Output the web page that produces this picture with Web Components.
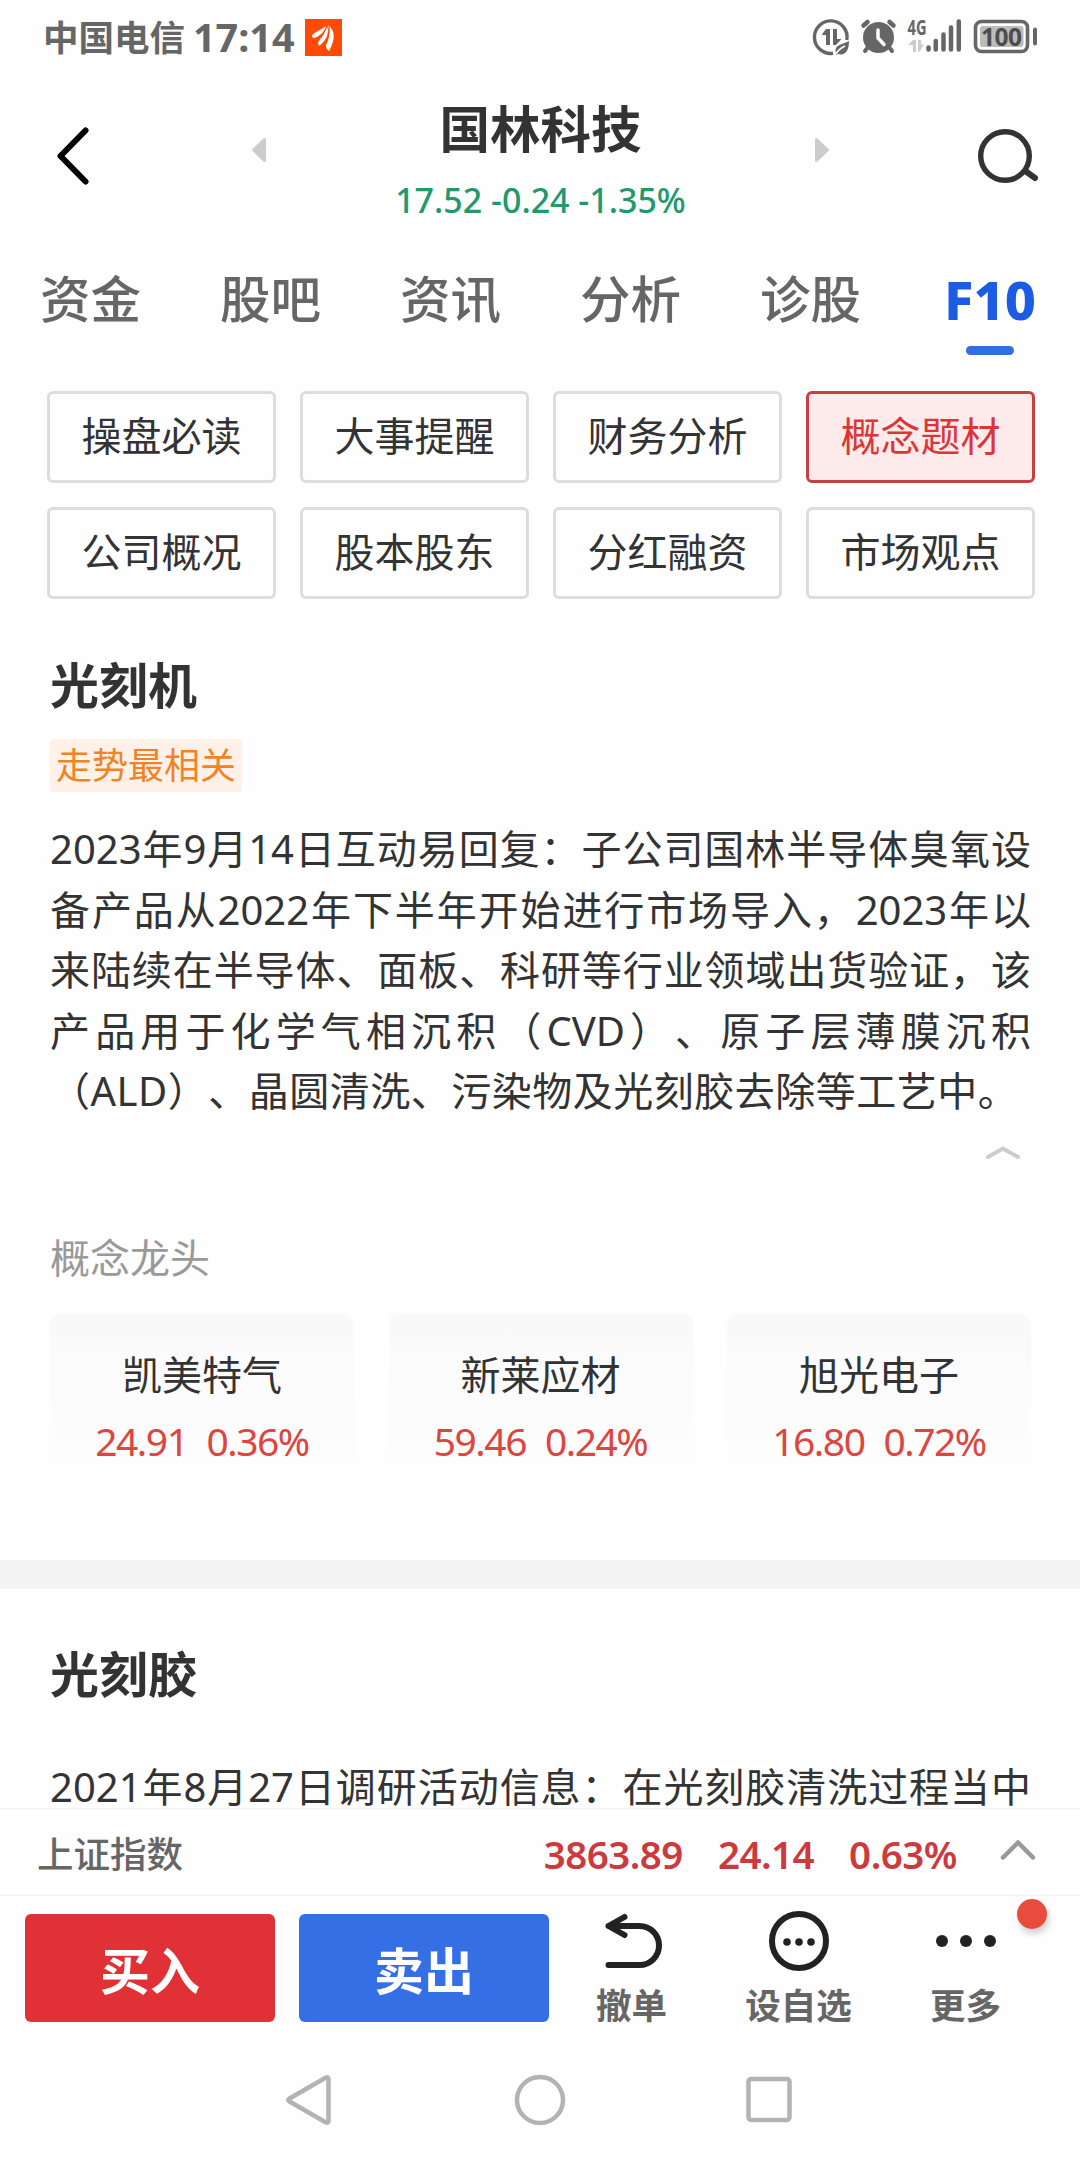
<!DOCTYPE html>
<html lang="zh-CN">
<head>
<meta charset="utf-8">
<title>国林科技 F10</title>
<style>
  body {
    margin: 0;
    background: #fefefe;
    color: #333;
    font-family: "Noto Sans CJK SC", sans-serif;
    --num-font: "Noto Sans", "Noto Sans CJK SC", sans-serif;
  }
</style>
</head>
<body>
<stock-page>
  <status-bar slot="top"></status-bar>
  <stock-header slot="top" name="国林科技" quote="17.52 -0.24 -1.35%"></stock-header>
  <tab-bar slot="top">
    <tab-item>资金</tab-item>
    <tab-item>股吧</tab-item>
    <tab-item>资讯</tab-item>
    <tab-item>分析</tab-item>
    <tab-item>诊股</tab-item>
    <tab-item active>F10</tab-item>
  </tab-bar>

  <menu-grid>
    <menu-button>操盘必读</menu-button>
    <menu-button>大事提醒</menu-button>
    <menu-button>财务分析</menu-button>
    <menu-button active>概念题材</menu-button>
    <menu-button>公司概况</menu-button>
    <menu-button>股本股东</menu-button>
    <menu-button>分红融资</menu-button>
    <menu-button>市场观点</menu-button>
  </menu-grid>
  <concept-section name="光刻机" tag="走势最相关">
    <text-line>2023年9月14日互动易回复：子公司国林半导体臭氧设</text-line>
    <text-line>备产品从2022年下半年开始进行市场导入，2023年以</text-line>
    <text-line>来陆续在半导体、面板、科研等行业领域出货验证，该</text-line>
    <text-line>产品用于化学气相沉积（CVD）、原子层薄膜沉积</text-line>
    <text-line last>（ALD）、晶圆清洗、污染物及光刻胶去除等工艺中。</text-line>
    <leader-list slot="extra">
      <leader-card name="凯美特气" price="24.91" change="0.36%"></leader-card>
      <leader-card name="新莱应材" price="59.46" change="0.24%"></leader-card>
      <leader-card name="旭光电子" price="16.80" change="0.72%"></leader-card>
    </leader-list>
  </concept-section>
  <concept-section name="光刻胶">
    <text-line>2021年8月27日调研活动信息：在光刻胶清洗过程当中</text-line>
  </concept-section>

  <index-bar slot="bottom"></index-bar>
  <trade-bar slot="bottom"></trade-bar>
  <system-nav slot="bottom"></system-nav>
</stock-page>

<script>
  function define(name, render) {
    customElements.define(name, class extends HTMLElement {
      constructor() {
        super();
        this.attachShadow({ mode: 'open' });
      }

      connectedCallback() {
        this.shadowRoot.innerHTML = render(this);
      }
    });
  }

  define('stock-page', () => `
    <style>
      :host { display: flex; flex-direction: column; width: 1080px; height: 2160px; overflow: hidden; }
      main { flex: 1; min-height: 0; overflow: hidden; }
    </style>
    <slot name="top"></slot>
    <main><slot></slot></main>
    <slot name="bottom"></slot>
  `);

  define('status-bar', () => `
    <style>
      :host { display: flex; align-items: center; height: 76px; box-sizing: border-box; padding: 0 42px 2px 43px; color: #666; }
      .carrier { font-size: 35.5px; font-weight: 700; line-height: 40px; margin-top: -3px; }
      .time { font: 700 39.5px/40px var(--num-font); margin-left: 8px; }
      .app { margin-left: 10px; }
      .icons { margin-left: auto; }
      svg { display: block; }
      text { font-family: var(--num-font); }
    </style>
    <span class="carrier">中国电信</span>
    <span class="time">17:14</span>
    <svg class="app" width="37" height="37" viewBox="0 0 37 37">
      <rect width="37" height="37" fill="#ff4a05"/>
      <path fill="#fff" d="M7 17c1-4 8-5 14-10-1 5-6 11-13 12zM13 24c1-4 6-6 9-17 3 8-2 16-8 20zM21 26c3-5 4-11 2-20 7 5 8 14 1 26-2-1-3-3-3-6z"/>
      <path fill="none" stroke="#ff4a05" stroke-width="1" d="M22 7c-2 6-5 9-10 13M24 7c1 8-1 13-4 18"/>
    </svg>
    <svg class="icons" width="226" height="70" viewBox="812 2 226 70" fill="none" stroke="#666">
      <g>
        <path stroke-width="3.400" d="M833 53.300A16.300 16.300 0 1 1 846.800 40"/>
        <path fill="#666" stroke="none" d="M826 29h4v16h-4V35h-4.500zM833 29h4v10h4.500L836 45h-3z"/>
        <path fill="#666" stroke="none" d="M836 53c-2-9 6-8 13-12 0 10-4 15-11 13l-2 1z"/>
        <path stroke="#fefefe" stroke-width="1.600" d="M836 54c2-4 5-6 9-8"/>
      </g>
      <g>
        <circle cx="878.500" cy="37.500" r="15.500" fill="#666" stroke="none"/>
        <path stroke-width="4.500" stroke-linecap="round" d="M863.500 25.500l4-3.500M893.500 25.500l-4-3.500"/>
        <path stroke-width="4" stroke-linecap="round" d="M868 47l-3 4M889 47l3 4"/>
        <path stroke="#fefefe" stroke-width="3.500" stroke-linecap="round" stroke-linejoin="round" d="M878 30v8l6 6.500"/>
      </g>
      <text x="907.500" y="34.500" font-size="21" font-weight="700" fill="#666" stroke="none" textLength="19" lengthAdjust="spacingAndGlyphs">4G</text>
      <path fill="#ccc" stroke="none" d="M913 40h3v12h-3v-7h-5zM918 40h3v4.500h3l-4 6.500-2 1z"/>
      <path stroke-width="4.500" stroke-linecap="round" d="M928.500 47.500v2M935.800 41v8.500M943.500 34.500v15M951 27.500v22M958.800 21.500v28"/>
      <rect x="975.500" y="21.500" width="52" height="30" rx="6" stroke-width="3.600"/>
      <rect x="980" y="26" width="43.500" height="21" rx="3" fill="#bbb" stroke="none"/>
      <text x="1001.500" y="45.500" text-anchor="middle" font-size="24.500" font-weight="700" fill="#4d4d4d" stroke="none" textLength="41">100</text>
      <path stroke-width="4" stroke-linecap="round" d="M1035 29.500v14"/>
    </svg>
  `);

  define('stock-header', el => `
    <style>
      :host { display: flex; align-items: center; height: 160px; }
      svg { display: block; flex: none; }
      .back { margin-left: 56px; }
      .prev { margin: -12px 0 0 162px; }
      .next { margin: -12px 148px 0 0; }
      .title { flex: 1; align-self: flex-start; text-align: center; padding-top: 20px; }
      .name { font-size: 50.5px; font-weight: 700; line-height: 60px; }
      .quote { margin-top: 25px; font: 500 34px/38px var(--num-font); color: #22986c; white-space: nowrap; }
    </style>
    <svg class="back" width="34" height="60" viewBox="0 0 34 60" fill="none" stroke="#000" stroke-width="6" stroke-linecap="round" stroke-linejoin="round"><path d="M29.500 4.500L4.500 30l25 25.500"/></svg>
    <svg class="prev" width="14" height="24" viewBox="0 0 14 24"><path fill="#ccc" d="M14 1v22q-1 2-3 0L.5 13q-1-1 0-2L11 1q2-2 3 0z"/></svg>
    <div class="title">
      <div class="name">${el.getAttribute('name')}</div>
      <div class="quote">${el.getAttribute('quote')}</div>
    </div>
    <svg class="next" width="14" height="24" viewBox="0 0 14 24"><path fill="#ccc" d="M0 1v22q1 2 3 0L13.500 13q1-1 0-2L3 1Q1-1 0 1z"/></svg>
    <svg class="search" width="103" height="60" viewBox="0 0 103 60" fill="none" stroke="#333"><circle cx="28" cy="30" r="24.300" stroke-width="5.400"/><path d="M49 45.500l9 6.500" stroke-width="6" stroke-linecap="round"/></svg>
  `);

  define('tab-bar', () => `
    <style>
      :host { display: flex; gap: 80px; padding: 30px 40px 0; }
    </style>
    <slot></slot>
  `);

  define('tab-item', () => `
    <style>
      :host { display: block; width: 100px; height: 89px; text-align: center; font-size: 50.5px; font-weight: 500; line-height: 60px; color: #666; white-space: nowrap; }
      :host([active]) { color: #1c5ce3; font-family: var(--num-font); font-size: 54px; font-weight: 800; line-height: 66px; }
      i { display: none; width: 48px; height: 9px; margin: 14px auto 0; border-radius: 5px; background: #326ee6; }
      :host([active]) i { display: block; }
    </style>
    <slot></slot><i></i>
  `);

  define('menu-grid', () => `
    <style>
      :host { display: grid; grid-template-columns: repeat(4, 229px); gap: 24px; padding: 36px 45px 0 47px; }
    </style>
    <slot></slot>
  `);

  define('menu-button', () => `
    <style>
      :host { display: block; box-sizing: border-box; height: 92px; border: 3px solid #ddd; border-radius: 6px; text-align: center; font-size: 40px; line-height: 80px; }
      :host([active]) { border-color: #c44042; background: #fdeaea; color: #dc3538; }
    </style>
    <slot></slot>
  `);

  define('concept-section', el => `
    <style>
      :host { display: block; }
      :host(:not([tag])) { border-top: 29px solid #f4f4f4; }
      h2 { margin: 54px 50px 0; font-size: 49px; font-weight: 700; line-height: 60px; }
      .tag { width: 192px; height: 53px; margin: 26px 50px 0; border-radius: 4px; background: #fff1e8; color: #f08326; font-size: 36px; line-height: 49px; text-align: center; white-space: nowrap; }
      .text { margin: 27px 49px 0 50px; }
      :host(:not([tag])) h2 { margin-top: 53px; }
      :host(:not([tag])) .text { margin-top: 55px; }
    </style>
    <h2>${el.getAttribute('name')}</h2>
    ${el.hasAttribute('tag') ? `<div class="tag">${el.getAttribute('tag')}</div>` : ''}
    <div class="text"><slot></slot></div>
    <slot name="extra"></slot>
  `);

  // one justified row of a paragraph
  define('text-line', () => `
    <style>
      :host { display: block; height: 60.5px; font-family: var(--num-font); font-size: 40px; line-height: 60px; text-align: justify; text-align-last: justify; white-space: nowrap; text-spacing-trim: space-all; }
      :host([last]) { text-align-last: left; letter-spacing: .5px; }
    </style>
    <slot></slot>
  `);

  define('leader-list', () => `
    <style>
      :host { display: block; padding: 23px 49px 73px 50px; }
      svg { display: block; margin: 0 10px 0 auto; }
      h3 { margin: 72px 0 32px; font-size: 40px; font-weight: 400; line-height: 50px; color: #999; }
      .cards { display: grid; grid-template-columns: repeat(3, 304px); justify-content: space-between; }
    </style>
    <svg width="36" height="14" viewBox="0 0 36 14" fill="none" stroke="#ccc" stroke-width="4" stroke-linecap="round" stroke-linejoin="round"><path d="M3 12l15-8.500L33 12"/></svg>
    <h3>概念龙头</h3>
    <div class="cards"><slot></slot></div>
  `);

  define('leader-card', el => `
    <style>
      :host { display: block; height: 174px; box-sizing: border-box; padding-top: 35px; border-radius: 12px; background: linear-gradient(#f9f9f9, #fefefe); text-align: center; }
      .name { font-size: 40px; line-height: 50px; }
      .quote { display: flex; justify-content: center; gap: 19px; margin-top: 18px; font: 400 39px/50px var(--num-font); letter-spacing: -1.5px; color: #dc463f; }
    </style>
    <div class="name">${el.getAttribute('name')}</div>
    <div class="quote"><span>${el.getAttribute('price')}</span><span>${el.getAttribute('change')}</span></div>
  `);

  define('index-bar', () => `
    <style>
      :host { display: flex; align-items: center; flex: none; box-sizing: border-box; height: 88px; padding: 0 43px 0 37px; border: solid #f0f0f0; border-width: 1px 0; }
      .name { font-size: 36.5px; font-weight: 500; line-height: 44px; color: #666; margin: 1px auto 0 0; }
      .num { font: 600 38.500px/44px var(--num-font); letter-spacing: -.5px; color: #cd3a3d; margin: 3px 35px 0 0; }
      svg { margin: -4px 1px 0 8px; }
    </style>
    <span class="name">上证指数</span>
    <span class="num">3863.89</span>
    <span class="num">24.14</span>
    <span class="num">0.63%</span>
    <svg width="36" height="22" viewBox="0 0 36 22" fill="none" stroke="#999" stroke-width="4.500" stroke-linecap="round" stroke-linejoin="round"><path d="M3 18.500l15-15 15 15"/></svg>
  `);

  define('trade-bar', () => `
    <style>
      :host { display: flex; flex: none; height: 144px; box-sizing: border-box; padding: 18px 0 0 25px; }
      .deal { width: 250px; height: 108px; margin-right: 24px; border-radius: 6px; color: #fff; font-size: 50px; font-weight: 700; line-height: 108px; text-align: center; }
      .buy { background: #e03136; }
      .sell { background: #346fe6; }
      .tool { position: relative; display: flex; flex-direction: column; align-items: center; margin-top: -4px; font-size: 35.500px; font-weight: 700; line-height: 44px; color: #666; }
      .undo { width: 117px; }
      .pick { width: 217px; }
      .more { width: 117px; }
      svg { display: block; margin-bottom: 10px; }
      .dot { position: absolute; left: 110px; top: -11px; width: 30px; height: 30px; border-radius: 50%; background: #e74c3c; box-shadow: 2px 5px 6px rgba(0, 0, 0, .18); }
    </style>
    <div class="deal buy">买入</div>
    <div class="deal sell">卖出</div>
    <div class="tool undo">
      <svg width="62" height="62" viewBox="600.500 1910 62 62" fill="none" stroke="#222" stroke-width="6" stroke-linecap="round" stroke-linejoin="round"><path d="M624 1917l-16 9 16 9M608 1926h31a19.500 19.500 0 0 1 0 39h-31"/></svg>
      撤单
    </div>
    <div class="tool pick">
      <svg width="62" height="62" viewBox="0 0 62 62" fill="#222"><circle cx="31" cy="31" r="27" fill="none" stroke="#222" stroke-width="6"/><circle cx="19" cy="32" r="3.800"/><circle cx="31" cy="32" r="3.800"/><circle cx="43" cy="32" r="3.800"/></svg>
      设自选
    </div>
    <div class="tool more">
      <svg width="62" height="62" viewBox="0 0 62 62" fill="#222"><circle cx="7" cy="31" r="6"/><circle cx="31" cy="31" r="6"/><circle cx="55" cy="31" r="6"/></svg>
      更多
      <i class="dot"></i>
    </div>
  `);

  define('system-nav', () => `
    <style>
      :host { display: flex; flex: none; justify-content: center; align-items: center; gap: 176px; height: 120px; }
      svg { display: block; }
    </style>
    <svg width="52" height="54" viewBox="-1 0 52 54" fill="none" stroke="#b3b3b3" stroke-width="4.500" stroke-linejoin="round"><path d="M40 4.500q2.500-1 2.500 1.500v42q0 2.500-2.500 1.500L3.500 28.500q-2.500-1.500 0-3z"/></svg>
    <svg width="54" height="54" viewBox="0 0 54 54" fill="none" stroke="#b3b3b3" stroke-width="4.500"><circle cx="27" cy="27" r="23"/></svg>
    <svg width="52" height="54" viewBox="-.5 0 52 54" fill="none" stroke="#b3b3b3" stroke-width="4.500"><rect x="5" y="6" width="41" height="41" rx="2.500"/></svg>
  `);
</script>
</body>
</html>
